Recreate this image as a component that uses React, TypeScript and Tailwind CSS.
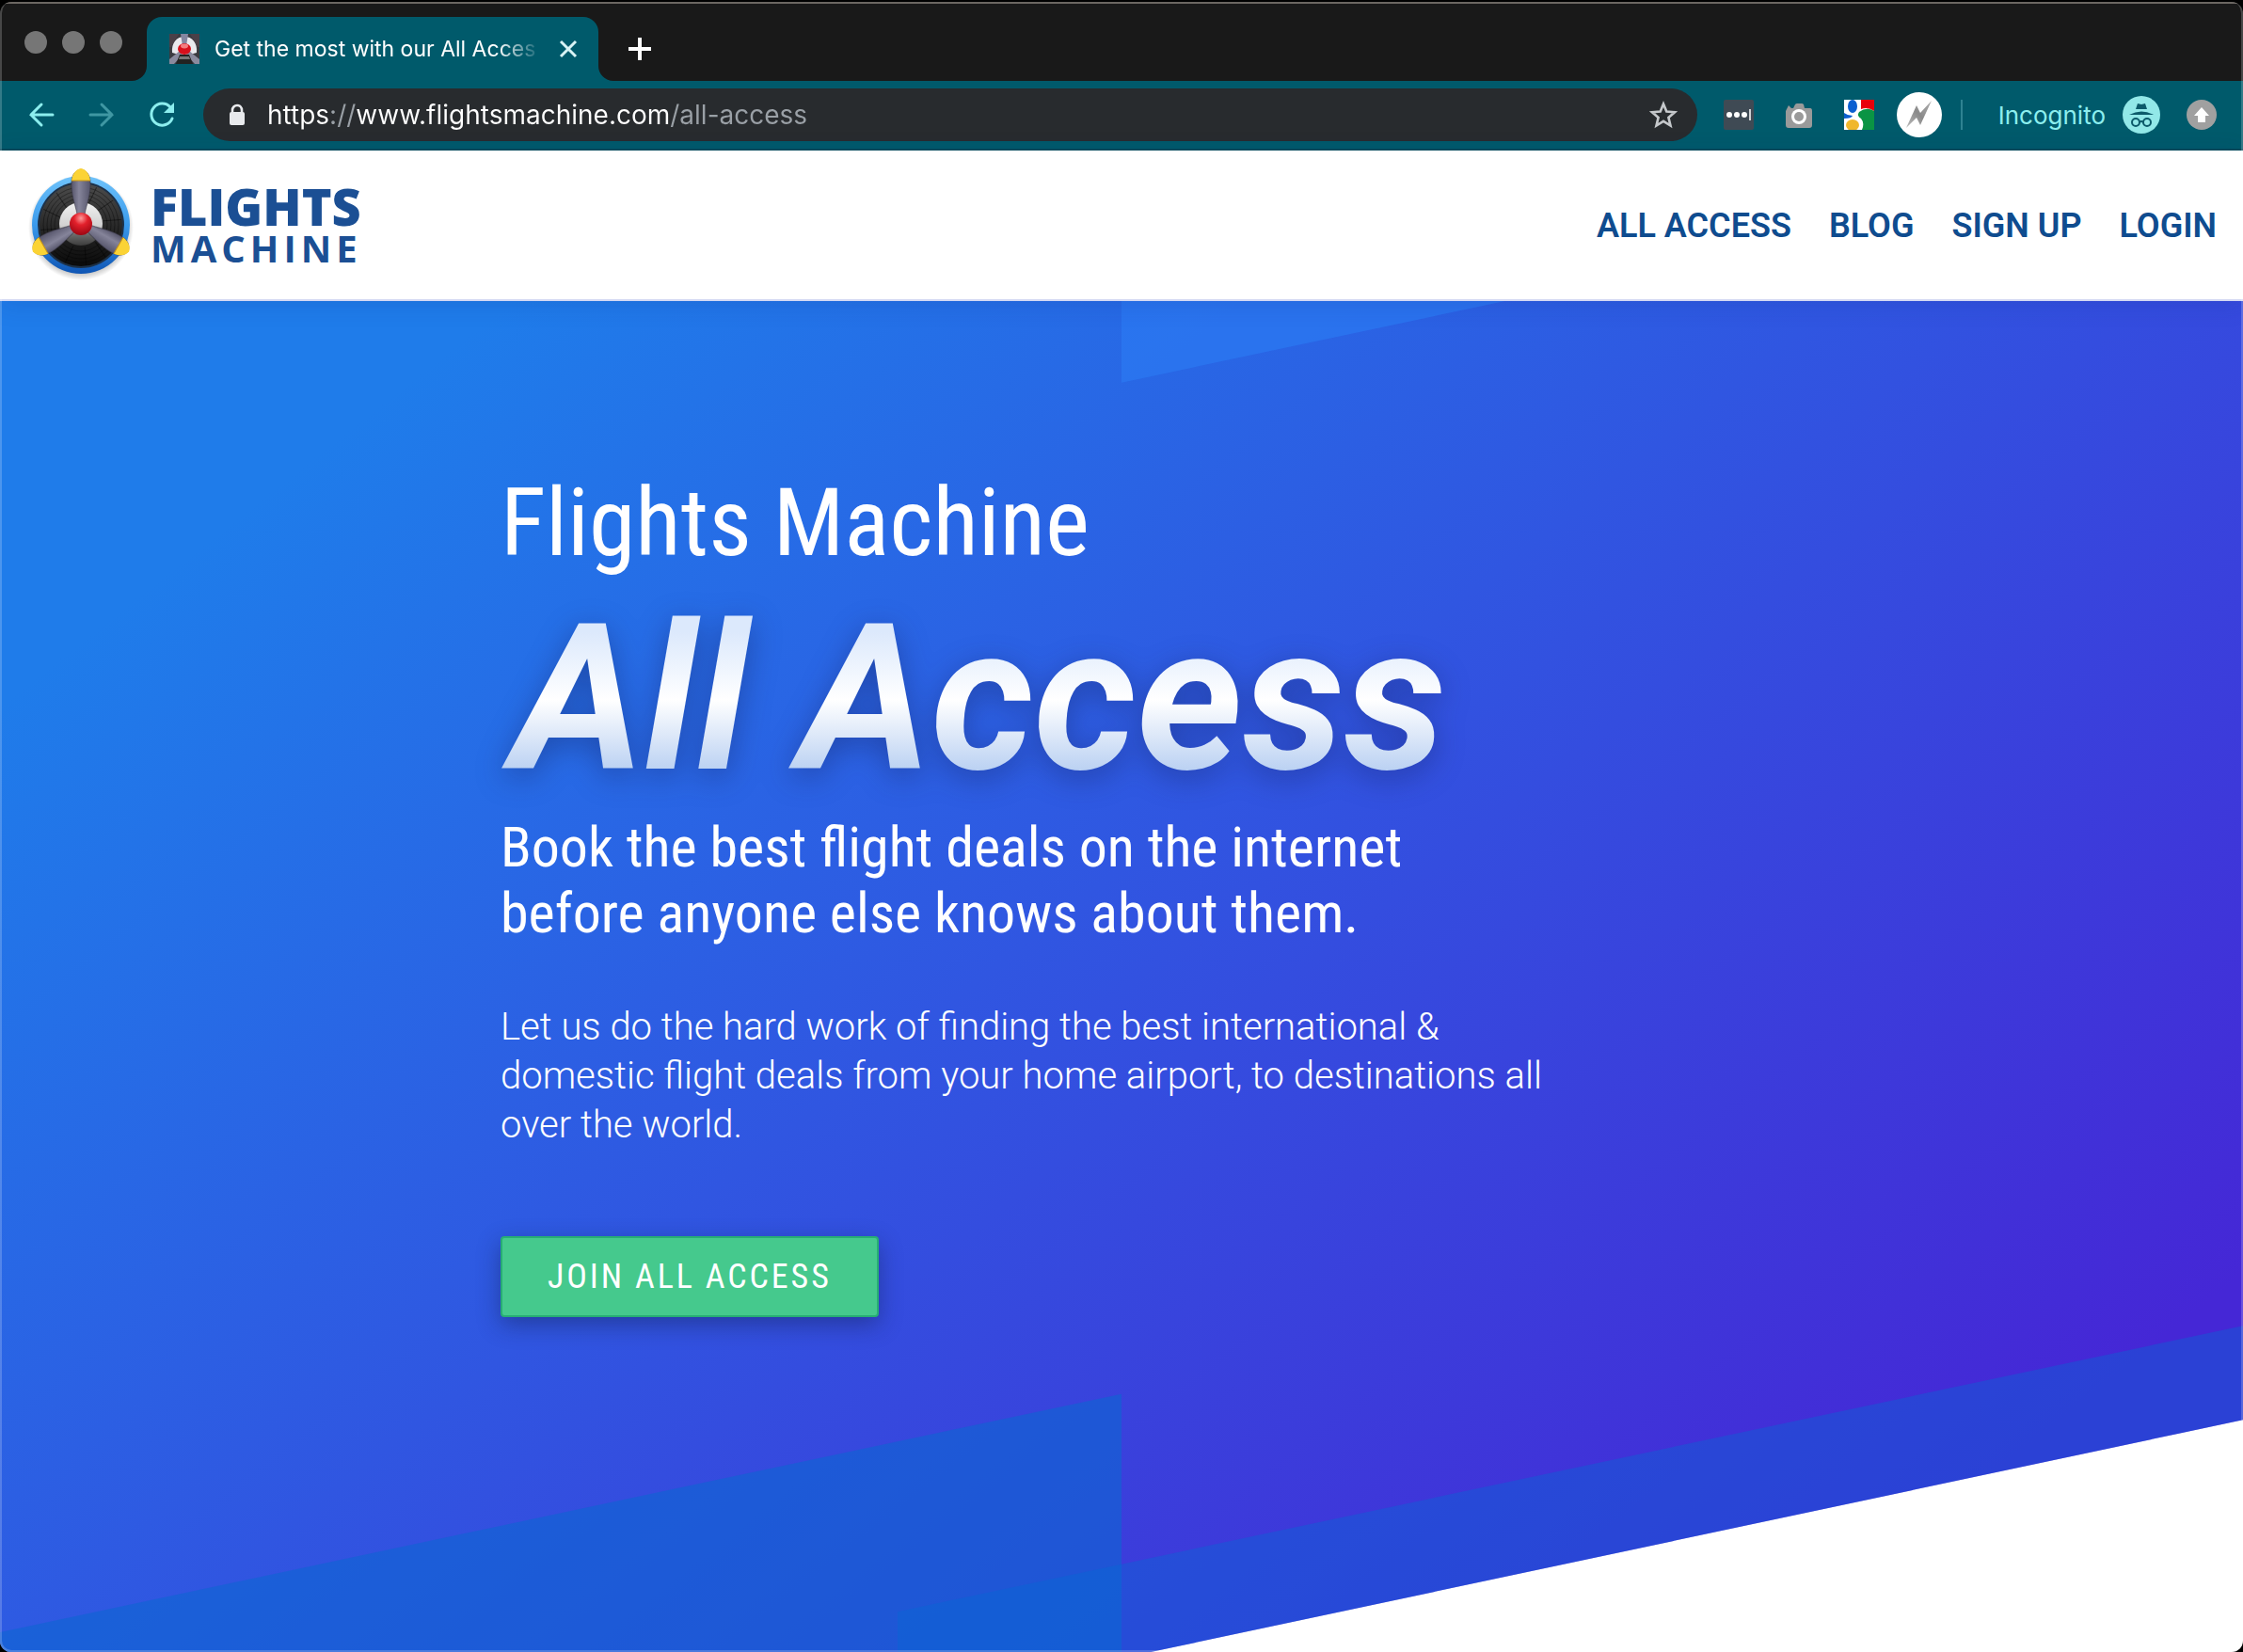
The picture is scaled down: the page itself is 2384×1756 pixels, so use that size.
import type { ReactNode } from "react";

const navLinks = ["ALL ACCESS", "BLOG", "SIGN UP", "LOGIN"];

const blades = [0, 120, 240];

function IconButton({
  label,
  className = "",
  children,
}: {
  label: string;
  className?: string;
  children: ReactNode;
}) {
  return (
    <button
      type="button"
      aria-label={label}
      className={`flex shrink-0 items-center justify-center ${className}`}
    >
      {children}
    </button>
  );
}

function Favicon() {
  return (
    <svg viewBox="0 0 32 32" className="h-8 w-8 shrink-0">
      <rect width="32" height="32" fill="#3a3a40" />
      <path d="M3 20 C2 9 8 3 16 3 C24 3 30 9 29 20 L22 22 L10 22 Z" fill="#e9e9ee" />
      <path d="M0 0 H10 L2 14 L0 14 Z" fill="#4a4048" />
      <path d="M32 0 H22 L30 14 L32 14 Z" fill="#4a4048" />
      <path d="M12 0 H20 L18 13 H14 Z" fill="#8486a0" />
      <path d="M0 27 L11 18 L14 22 L5 32 H0 Z" fill="#8a8a9e" />
      <path d="M32 27 L21 18 L18 22 L27 32 H32 Z" fill="#8a8a9e" />
      <path d="M11 22 H21 L25 32 H7 Z" fill="#222" />
      <path d="M11 24 H21 L22 27 H10 Z" fill="#777" />
      <ellipse cx="16" cy="16" rx="7" ry="6" fill="#d8101c" />
      <ellipse cx="16" cy="13" rx="4" ry="2.4" fill="#f47c80" />
    </svg>
  );
}

function PropellerLogo() {
  return (
    <svg viewBox="0 0 112 120" className="h-[120px] w-[112px] shrink-0">
      <defs>
        <linearGradient id="ring" x1="0" y1="0" x2="0" y2="1">
          <stop offset="0" stopColor="#6fc3fb" />
          <stop offset="0.5" stopColor="#3a9aec" />
          <stop offset="1" stopColor="#0f55b4" />
        </linearGradient>
        <linearGradient id="engine" x1="0" y1="0" x2="0" y2="1">
          <stop offset="0" stopColor="#4c4c4c" />
          <stop offset="0.6" stopColor="#232323" />
          <stop offset="1" stopColor="#0a0a0a" />
        </linearGradient>
        <linearGradient id="hubPlate" x1="0" y1="0" x2="0" y2="1">
          <stop offset="0" stopColor="#f2f2f2" />
          <stop offset="0.55" stopColor="#d0d0d0" />
          <stop offset="0.75" stopColor="#6a6a6a" />
          <stop offset="1" stopColor="#3c3c3c" />
        </linearGradient>
        <linearGradient id="blade" x1="0" y1="0" x2="1" y2="0">
          <stop offset="0" stopColor="#55546a" />
          <stop offset="0.4" stopColor="#85849a" />
          <stop offset="1" stopColor="#55546a" />
        </linearGradient>
        <radialGradient id="hub" cx="0.5" cy="0.25" r="0.75">
          <stop offset="0" stopColor="#ff9a9a" />
          <stop offset="0.4" stopColor="#e2202b" />
          <stop offset="1" stopColor="#9d0612" />
        </radialGradient>
        <radialGradient id="ground" cx="0.5" cy="0.5" r="0.5">
          <stop offset="0.85" stopColor="#000" stopOpacity="0.25" />
          <stop offset="1" stopColor="#000" stopOpacity="0" />
        </radialGradient>
      </defs>
      <circle cx="56" cy="63" r="56" fill="url(#ground)" />
      <circle cx="56" cy="60" r="52" fill="url(#ring)" />
      <circle cx="56" cy="60" r="46" fill="#1d3148" />
      <circle cx="56" cy="60" r="44" fill="url(#engine)" />
      <g fill="none" stroke="#000" strokeOpacity="0.35">
        <circle cx="56" cy="60" r="40" />
        <circle cx="56" cy="60" r="36" />
        <circle cx="56" cy="60" r="32" />
        <circle cx="56" cy="60" r="28" />
      </g>
      <g stroke="#000" strokeOpacity="0.45">
        {[20, 50, 80, 110, 140, 170, 200, 230, 260, 290, 320, 350].map((a) => (
          <line key={a} x1="56" y1="36" x2="58" y2="17" transform={`rotate(${a} 56 60)`} />
        ))}
      </g>
      <circle cx="56" cy="59" r="23" fill="url(#hubPlate)" />
      {blades.map((a) => (
        <g key={a} transform={`rotate(${a} 56 59)`}>
          <path
            d="M52 49 C50 38 45 27 46 13 C47 5 51 2 56 1 C61 2 65 5 66 13 C67 27 62 38 60 49 Z"
            fill="url(#blade)"
            stroke="#2f2e3a"
            strokeOpacity="0.5"
            strokeWidth="1"
          />
          <path d="M46 13 C47 5 51 1 56 0 C61 1 65 5 66 13 Z" fill="#fbd335" />
          <path d="M46 13 H66" stroke="#c79414" strokeWidth="1" />
        </g>
      ))}
      <circle cx="56" cy="59" r="12" fill="url(#hub)" />
    </svg>
  );
}

function TabStrip() {
  return (
    <div className="flex h-[84px] items-end border-t-2 border-[#6b6662] bg-[#191919]">
      <div className="flex h-[82px] w-[140px] shrink-0 items-center gap-4 pl-[26px]">
        {["Close window", "Minimize window", "Zoom window"].map((label) => (
          <button
            key={label}
            type="button"
            aria-label={label}
            className="h-6 w-6 rounded-full bg-[#767676]"
          />
        ))}
      </div>
      <svg viewBox="0 0 16 16" className="h-4 w-4 shrink-0">
        <path d="M16 0 V16 H0 A16 16 0 0 0 16 0 Z" fill="#005a6b" />
      </svg>
      <div className="flex h-[68px] w-[480px] shrink-0 items-center rounded-t-2xl bg-[#005a6b] pr-5 pl-6">
        <Favicon />
        <p className="ml-4 w-[350px] overflow-hidden text-[23px] leading-8 whitespace-nowrap text-white [mask-image:linear-gradient(to_right,black_300px,transparent)]">
          Get the most with our All Acces
        </p>
        <IconButton label="Close tab" className="ml-4 h-6 w-6">
          <svg viewBox="0 0 24 24" className="h-6 w-6">
            <path d="M4 4 L20 20 M20 4 L4 20" stroke="#d9f3f5" strokeWidth="3" />
          </svg>
        </IconButton>
      </div>
      <svg viewBox="0 0 16 16" className="h-4 w-4 shrink-0">
        <path d="M0 0 V16 H16 A16 16 0 0 1 0 0 Z" fill="#005a6b" />
      </svg>
      <IconButton label="New tab" className="ml-3 h-[68px] w-8">
        <svg viewBox="0 0 32 32" className="h-8 w-8">
          <path d="M16 4 V28 M4 16 H28" stroke="#fff" strokeWidth="4" />
        </svg>
      </IconButton>
    </div>
  );
}

function Toolbar() {
  return (
    <div className="flex h-[74px] items-center border-b-2 border-[#044a5a] bg-[#005a6b] px-7">
      <IconButton label="Back" className="h-8 w-8">
        <svg viewBox="0 0 32 32" className="h-8 w-8" fill="none" stroke="#8ceeee" strokeWidth="3">
          <path d="M28 16 H5 M16 5 L5 16 L16 27" strokeLinecap="round" />
        </svg>
      </IconButton>
      <IconButton label="Forward" className="ml-8 h-8 w-8">
        <svg viewBox="0 0 32 32" className="h-8 w-8" fill="none" stroke="#3f97a3" strokeWidth="3">
          <path d="M4 16 H27 M16 5 L27 16 L16 27" strokeLinecap="round" />
        </svg>
      </IconButton>
      <IconButton label="Reload" className="ml-8 h-8 w-8">
        <svg viewBox="0 0 32 32" className="h-8 w-8">
          <path
            d="M27 20 A11.5 11.5 0 1 1 25 8"
            fill="none"
            stroke="#8ceeee"
            strokeWidth="3"
            strokeLinecap="round"
          />
          <path d="M29 3 V14 H18 Z" fill="#8ceeee" />
        </svg>
      </IconButton>
      <div className="ml-7 flex h-14 flex-1 items-center rounded-full bg-[#282b2e] pr-5 pl-6">
        <svg viewBox="0 0 24 24" className="h-6 w-6 shrink-0">
          <path d="M7 11 V7 A5 5 0 0 1 17 7 V11" fill="none" stroke="#e8eaed" strokeWidth="2.6" />
          <rect x="4" y="9" width="16" height="14" rx="2" fill="#e8eaed" />
        </svg>
        {/* the gradient dims the scheme slashes and the path */}
        <input
          type="text"
          aria-label="Address"
          defaultValue="https://www.flightsmachine.com/all-access"
          className="ml-5 h-10 min-w-0 flex-1 bg-[linear-gradient(to_right,#fff_68px,#9aa0a6_68px,#9aa0a6_95px,#fff_95px,#fff_428px,#9aa0a6_428px)] bg-clip-text text-[28px] text-transparent outline-none"
        />
        <IconButton label="Bookmark this page" className="h-8 w-8">
          <svg viewBox="0 0 32 32" className="h-8 w-8">
            <path
              d="M16 4.5 L19.3 12.5 L28 13.2 L21.4 18.9 L23.5 27.5 L16 22.9 L8.5 27.5 L10.6 18.9 L4 13.2 L12.7 12.5 Z"
              fill="none"
              stroke="#c5c8cb"
              strokeWidth="2.6"
            />
          </svg>
        </IconButton>
      </div>
      <IconButton label="Password manager" className="ml-7 h-8 w-8">
        <svg viewBox="0 0 32 32" className="h-8 w-8">
          <rect width="32" height="32" rx="2" fill="#3f4a54" />
          <circle cx="6" cy="16" r="3" fill="#fff" />
          <circle cx="14" cy="16" r="3" fill="#fff" />
          <circle cx="22" cy="16" r="3" fill="#fff" />
          <path d="M28 10 V22" stroke="#fff" strokeWidth="1.5" />
        </svg>
      </IconButton>
      <IconButton label="Screenshot" className="ml-8 h-8 w-8">
        <svg viewBox="0 0 32 32" className="h-8 w-8">
          <path
            d="M3 10 L5 6 L8 9 H10 L12 5 Q13 4 14 4 H19 Q20 4 21 5 L22 9 H28 Q30 9 30 12 V27 Q30 30 27 30 H5 Q2 30 2 27 V12 Z"
            fill="#9a9a9a"
          />
          <circle cx="16" cy="18" r="8" fill="#fff" />
          <circle cx="16" cy="18" r="5" fill="#9a9a9a" />
        </svg>
      </IconButton>
      <IconButton label="Search extension" className="ml-8 h-8 w-8">
        <svg viewBox="0 0 32 32" className="h-8 w-8">
          <rect width="32" height="32" fill="#fff" />
          <path d="M18 0 H32 V12 Q25 7 18 10 Z" fill="#e8000b" />
          <path d="M16 13 Q24 7 32 12 V32 H19 Q22 25 18 20 Q13 17 16 13 Z" fill="#0a9444" />
          <path d="M0 14 Q4 17 9 17 Q8 20 0 20 Z" fill="#0b5fd0" />
          <ellipse cx="9" cy="7" rx="5" ry="7" fill="#0b5fd0" />
          <ellipse cx="9" cy="27" rx="7" ry="6" fill="#f0b72c" />
        </svg>
      </IconButton>
      <IconButton label="Lightning extension" className="ml-6 h-12 w-12">
        <svg viewBox="0 0 48 48" className="h-12 w-12">
          <defs>
            <linearGradient id="bolt" x1="1" y1="0" x2="0" y2="1">
              <stop offset="0" stopColor="#b0b0b0" />
              <stop offset="0.5" stopColor="#8a8a8a" />
              <stop offset="1" stopColor="#bdbdbd" />
            </linearGradient>
          </defs>
          <circle cx="24" cy="24" r="24" fill="#fff" />
          <path d="M37 9 L25 35 L21 27 L10 38 L21 14 L25 22 Z" fill="url(#bolt)" />
        </svg>
      </IconButton>
      <span className="ml-5 h-8 w-[2px] shrink-0 bg-[#2e8392]" />
      <span className="ml-[38px] text-[26px] text-[#8ceeee]">Incognito</span>
      <svg viewBox="0 0 40 40" className="ml-[18px] h-10 w-10 shrink-0">
        <circle cx="20" cy="20" r="20" fill="#92e8e8" />
        <path d="M14 14 L16 8 L20 9 L24 8 L26 14 Z" fill="#0c5a6a" />
        <path d="M7 20 Q20 13 33 20 Z" fill="#0c5a6a" />
        <g fill="none" stroke="#0c5a6a" strokeWidth="2">
          <circle cx="14" cy="28" r="4" />
          <circle cx="26" cy="28" r="4" />
          <path d="M18 28 Q20 26 22 28" />
        </g>
      </svg>
      <IconButton label="Update available" className="ml-7 h-8 w-8">
        <svg viewBox="0 0 32 32" className="h-8 w-8">
          <circle cx="16" cy="16" r="16" fill="#a0a0a0" />
          <path d="M16 8 L24 17 H20 V24 H12 V17 H8 Z" fill="#fff" />
        </svg>
      </IconButton>
    </div>
  );
}

function SiteHeader() {
  return (
    <header className="relative z-10 flex h-40 items-center justify-between border-b-2 border-[#d5d9f3] bg-white px-7 shadow-[0_4px_24px_rgba(20,40,120,0.15)]">
      <a
        href="#"
        aria-label="Flights Machine home"
        className="ml-[2px] flex items-center gap-[18px] text-[#1b4f94]"
      >
        <PropellerLogo />
        <span className="flex flex-col pt-1 font-['Open_Sans',sans-serif]">
          <span className="text-[54px] leading-[46px] font-extrabold">FLIGHTS</span>
          <span className="text-[40px] leading-[44px] font-bold tracking-[5px]">MACHINE</span>
        </span>
      </a>
      <nav className="flex gap-10 pt-[2px]">
        {navLinks.map((link) => (
          <a
            key={link}
            href="#"
            className="font-['Roboto',sans-serif] text-4xl font-semibold text-[#0f4c8f]"
          >
            {link}
          </a>
        ))}
      </nav>
    </header>
  );
}

function Hero() {
  return (
    <main className="relative h-[1436px] overflow-hidden bg-white">
      <div
        aria-hidden="true"
        className="absolute inset-x-0 top-0 h-[1696px] origin-top-left -skew-y-12 bg-[linear-gradient(150deg,#1f7cea_14%,#4527d6_95%)]"
      >
        <span className="absolute top-0 left-1/2 h-[340px] w-1/2 bg-[#2b79f2]/70" />
        <span className="absolute top-[1415px] bottom-0 left-0 w-1/2 bg-[#0d66d2]/60" />
        <span className="absolute right-0 bottom-0 left-[40%] h-[100px] bg-[#0568d4]/40" />
      </div>
      <div className="relative ml-[532px] flex max-w-[1130px] flex-col items-start pt-[180px] text-white">
        <p className="font-['Roboto_Condensed',Roboto,sans-serif] text-[100px] leading-[112px]">
          Flights Machine
        </p>
        <h1 className="mt-3 -ml-4 bg-[linear-gradient(180deg,#dce9fc_20%,#ffffff_50%,#b9d0f2_82%)] bg-clip-text px-7 font-['Roboto',sans-serif] text-[216px] leading-[240px] font-bold text-transparent italic drop-shadow-[0_8px_16px_rgba(20,30,90,0.4)]">
          All Access
        </h1>
        <h2 className="mt-[2px] font-['Roboto_Condensed',Roboto,sans-serif] text-[60px] leading-[70px] font-normal">
          Book the best flight deals on the internet
          <br />
          before anyone else knows about them.
        </h2>
        <p className="mt-[60px] font-['Roboto',sans-serif] text-[40px] leading-[52px] font-light">
          Let us do the hard work of finding the best international & domestic flight deals from
          your home airport, to destinations all over the world.
        </p>
        <button
          type="button"
          className="mt-[92px] h-[86px] rounded border-2 border-[#27ae73] bg-[#45c98d] px-12 font-['Roboto_Condensed',Roboto,sans-serif] text-4xl tracking-[0.08em] shadow-[0_8px_24px_rgba(20,30,80,0.45)]"
        >
          JOIN ALL ACCESS
        </button>
      </div>
    </main>
  );
}

export default function App() {
  return (
    <div className="bg-black pt-[2px] font-['Inter',sans-serif]">
      <div className="relative overflow-hidden rounded-xl">
        <TabStrip />
        <Toolbar />
        <SiteHeader />
        <Hero />
        <div className="pointer-events-none absolute inset-0 z-20 rounded-xl border-2 border-t-0 border-white/20" />
      </div>
    </div>
  );
}
